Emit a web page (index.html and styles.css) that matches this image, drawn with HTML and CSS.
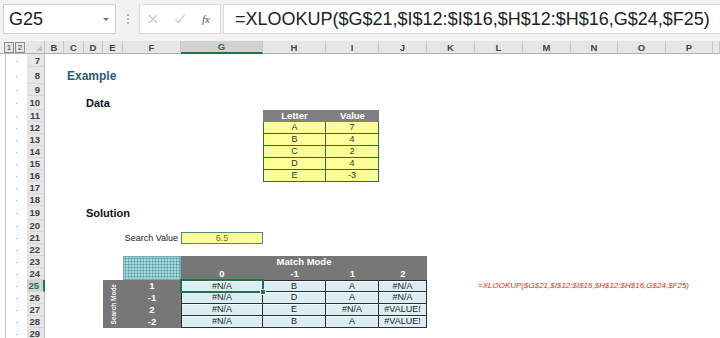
FILE: index.html
```html
<!DOCTYPE html>
<html lang="en">
<head>
    <meta charset="UTF-8">
    <title>XLOOKUP - Match Mode</title>
    <link rel="stylesheet" href="styles.css">
</head>
<body>
    <!-- FORMULA BAR -->
    <div class="formula-bar">
        <div class="name-box">
            <span>G25</span>
            <span class="caret"></span>
        </div>
        <div class="grip"></div>
        <div class="fx-box">
            <svg class="fx-icon" width="10" height="10" viewBox="0 0 10 10"><path d="M1 1L9 9M9 1L1 9" stroke="#c4c4c4" stroke-width="1.2" fill="none"/></svg>
            <svg class="fx-icon" width="10" height="10" viewBox="0 0 10 10"><path d="M0.5 5.5L3.5 8.5L9.5 1" stroke="#c4c4c4" stroke-width="1.2" fill="none"/></svg>
            <span class="fx-text">fx</span>
        </div>
        <div class="formula-input">=XLOOKUP($G$21,$I$12:$I$16,$H$12:$H$16,G$24,$F25)</div>
    </div>

    <!-- SHEET -->
    <div class="sheet">
        <!-- column headers -->
        <div class="outline-btns"><span>1</span><span>2</span></div>
        <div class="corner"><i></i></div>
        <div class="ch">B</div>
        <div class="ch">C</div>
        <div class="ch">D</div>
        <div class="ch">E</div>
        <div class="ch">F</div>
        <div class="ch active">G</div>
        <div class="ch">H</div>
        <div class="ch">I</div>
        <div class="ch">J</div>
        <div class="ch">K</div>
        <div class="ch">L</div>
        <div class="ch">M</div>
        <div class="ch">N</div>
        <div class="ch">O</div>
        <div class="ch">P</div>
        <div class="ch"></div>

        <!-- row headers -->
        <div class="rh"><span>7</span></div>
        <div class="rh"><span>8</span></div>
        <div class="rh"><span>9</span></div>
        <div class="rh"><span>10</span></div>
        <div class="rh"><span>11</span></div>
        <div class="rh"><span>12</span></div>
        <div class="rh"><span>13</span></div>
        <div class="rh"><span>14</span></div>
        <div class="rh"><span>15</span></div>
        <div class="rh"><span>16</span></div>
        <div class="rh"><span>17</span></div>
        <div class="rh"><span>18</span></div>
        <div class="rh"><span>19</span></div>
        <div class="rh"><span>20</span></div>
        <div class="rh"><span>21</span></div>
        <div class="rh"><span>22</span></div>
        <div class="rh"><span>23</span></div>
        <div class="rh"><span>24</span></div>
        <div class="rh on"><span>25</span></div>
        <div class="rh"><span>26</span></div>
        <div class="rh"><span>27</span></div>
        <div class="rh"><span>28</span></div>
        <div class="rh"><span>29</span></div>

        <!-- content -->
        <div class="title">Example</div>
        <div class="sub data-title">Data</div>

        <div class="letters">
            <div class="lh">Letter</div><div class="lh">Value</div>
            <div class="lc l">A</div><div class="lc">7</div>
            <div class="lc l">B</div><div class="lc">4</div>
            <div class="lc l">C</div><div class="lc">2</div>
            <div class="lc l">D</div><div class="lc">4</div>
            <div class="lc l">E</div><div class="lc">-3</div>
        </div>

        <div class="sub solution-title">Solution</div>
        <div class="search-label">Search Value</div>
        <div class="search-value">6.5</div>

        <div class="modes">
            <div class="mm-blank"></div>
            <div class="hatch"></div>
            <div class="mm-title">Match Mode</div>
            <div class="mm-col">0</div>
            <div class="mm-col">-1</div>
            <div class="mm-col">1</div>
            <div class="mm-col">2</div>
            <div class="sm-label"><span>Search Mode</span></div>

            <div class="sm-val">1</div>
            <div class="dc l t sel">#N/A</div><div class="dc t">B</div><div class="dc t">A</div><div class="dc t">#N/A</div>
            <div class="sm-val">-1</div>
            <div class="dc l">#N/A</div><div class="dc">D</div><div class="dc">A</div><div class="dc">#N/A</div>
            <div class="sm-val">2</div>
            <div class="dc l">#N/A</div><div class="dc">E</div><div class="dc">#N/A</div><div class="dc">#VALUE!</div>
            <div class="sm-val">-2</div>
            <div class="dc l">#N/A</div><div class="dc">B</div><div class="dc">A</div><div class="dc">#VALUE!</div>
        </div>

        <div class="formula-note">=XLOOKUP($G$21,$I$12:$I$16,$H$12:$H$16,G$24,$F25)</div>
    </div>
</body>
</html>
```

FILE: styles.css
```css
:root {
    --excel-green: #217346;
    --header-bg: #e6e6e6;
    --header-sel: #d2d2d2;
    --grey-block: #777777;
    --yellow: #ffff99;
    --teal-border: #2f6666;
}

body {
    margin: 0;
    width: 720px;
    height: 338px;
    overflow: hidden;
    font-family: 'Liberation Sans', Arial, sans-serif;
    background: #ffffff;
}

/* FORMULA BAR */
.formula-bar {
    height: 41px;
    box-sizing: border-box;
    padding: 4px 0 7px 3px;
    display: flex;
    align-items: stretch;
    background: #f2f2f2;
}

.name-box {
    width: 113px;
    box-sizing: border-box;
    background: #fff;
    border: 1px solid #d4d4d4;
    padding: 0 6px 0 5px;
    display: flex;
    align-items: center;
    justify-content: space-between;
    font-size: 18px;
    color: #222;
}

.caret {
    width: 0;
    height: 0;
    border-left: 3px solid transparent;
    border-right: 3px solid transparent;
    border-top: 3px solid #707070;
}

.grip {
    width: 0;
    margin: 10px 0 10px 11px;
    border-left: 2px dotted #b4b4b4;
}

.fx-box {
    width: 82px;
    margin-left: 10px;
    box-sizing: border-box;
    background: #fff;
    border: 1px solid #dcdcdc;
    padding-left: 8px;
    display: flex;
    align-items: center;
    gap: 17px;
}

.fx-text {
    font-family: 'Liberation Serif', serif;
    font-style: italic;
    font-size: 11px;
    color: #555;
    width: 10px;
}

.formula-input {
    flex: 1;
    margin-left: 2px;
    background: #fff;
    border: 1px solid #dcdcdc;
    border-right: none;
    padding-left: 11px;
    display: flex;
    align-items: center;
    font-size: 18px;
    color: #222;
    white-space: nowrap;
}

/* SHEET GRID */
.sheet {
    display: grid;
    grid-template-columns: 26px 19px 19px 20px 19px 20px 58px 82px 63px 53px 48px 48px 48px 48px 47px 48px 47px 7px;
    grid-template-rows: 13px 13px 17px 12px 14px repeat(8, 12px) 14px repeat(10, 12px);
    font-size: 9px;
    color: #222;
}

.outline-btns {
    grid-row: 1;
    background: #f0f0f0;
    border-bottom: 1px solid #b4b4b4;
    display: flex;
    align-items: flex-start;
    padding: 1px 0 0 4px;
    gap: 1px;
}

.outline-btns span {
    width: 8px;
    height: 9px;
    border: 1px solid #8c8c8c;
    background: #e4e4e4;
    font-size: 8px;
    line-height: 9px;
    text-align: center;
    color: #444;
}

.corner {
    grid-row: 1;
    background: var(--header-bg);
    border-right: 1px solid #c4c4c4;
    border-bottom: 1px solid #a9b3be;
    display: flex;
    justify-content: flex-end;
    align-items: flex-end;
    padding: 0 2px 2px 0;
}

.corner i {
    width: 0;
    height: 0;
    border-left: 6px solid transparent;
    border-bottom: 6px solid #c0c0c0;
}

.ch {
    grid-row: 1;
    background: var(--header-bg);
    border-right: 1px solid #c8c8c8;
    border-bottom: 1px solid #a9b3be;
    display: flex;
    align-items: center;
    justify-content: center;
    font-size: 9.5px;
    font-weight: bold;
    color: #444;
}

.ch.active {
    background: var(--header-sel);
    color: var(--excel-green);
    border-bottom: 2px solid var(--excel-green);
}

.rh {
    grid-column: 1 / 3;
    display: flex;
}

.rh::before {
    content: "·";
    width: 21px;
    margin-left: 5px;
    border-left: 1px solid #c3c3c3;
    display: flex;
    align-items: center;
    justify-content: center;
    font-size: 9px;
    color: #888;
}

.rh span {
    flex: 1;
    background: var(--header-bg);
    border-right: 1px solid #b9b9b9;
    border-bottom: 1px solid #d6d6d6;
    padding-right: 4px;
    display: flex;
    align-items: center;
    justify-content: flex-end;
    font-size: 9.5px;
    font-weight: bold;
    color: #444;
}

.rh.on span {
    background: var(--header-sel);
    color: var(--excel-green);
    border-right: 2px solid var(--excel-green);
}

/* CONTENT */
.title {
    grid-row: 3;
    grid-column: 4 / 9;
    align-self: center;
    padding-left: 3px;
    font-size: 12px;
    font-weight: bold;
    color: #1f6277;
}

.sub {
    grid-column: 5 / 9;
    align-self: center;
    padding-left: 2px;
    font-size: 11px;
    font-weight: bold;
    color: #111;
}

.data-title { grid-row: 5; }
.solution-title { grid-row: 14; }

.letters {
    grid-row: 6 / 12;
    grid-column: 9 / 11;
    display: grid;
    grid-template-columns: 63px 53px;
    grid-auto-rows: 12px;
    text-align: center;
    color: #333;
}

.lh {
    background: #7f7f7f;
    color: #fff;
    font-weight: bold;
    font-size: 9.5px;
    line-height: 12px;
}

.lc {
    background: var(--yellow);
    border-right: 1px solid var(--teal-border);
    border-bottom: 1px solid var(--teal-border);
    line-height: 11px;
}

.lc.l { border-left: 1px solid var(--teal-border); }

.search-label {
    grid-row: 16;
    grid-column: 7;
    text-align: right;
    padding-right: 3px;
    line-height: 12px;
}

.search-value {
    grid-row: 16;
    grid-column: 8;
    background: var(--yellow);
    border: 1px solid #4e8585;
    text-align: center;
    line-height: 10px;
    color: #6a780f;
}

/* MATCH MODE TABLE */
.modes {
    grid-row: 18 / 24;
    grid-column: 6 / 12;
    display: grid;
    grid-template-columns: 20px 58px 82px 63px 53px 48px;
    grid-template-rows: repeat(6, 12px);
    text-align: center;
}

.mm-blank { grid-column: 1; grid-row: 1 / 3; }

.hatch {
    grid-column: 2;
    grid-row: 1 / 3;
    background-color: #a9d7dc;
    background-image: radial-gradient(circle, #4b98a0 0.8px, transparent 1.2px);
    background-size: 3px 3px;
    border: 1px solid #6fb0b6;
}

.mm-title {
    grid-column: 3 / 7;
    grid-row: 1;
    background: var(--grey-block);
}

.mm-title, .mm-col, .sm-val {
    color: #fff;
    font-weight: bold;
    font-size: 9.5px;
    line-height: 12px;
}

.mm-col {
    grid-row: 2;
    background: var(--grey-block);
}

.sm-label {
    grid-column: 1;
    grid-row: 3 / 7;
    background: var(--grey-block);
    display: flex;
    align-items: center;
    justify-content: center;
}

.sm-label span {
    writing-mode: vertical-rl;
    transform: rotate(180deg);
    font-size: 6.5px;
    font-weight: bold;
    color: #f2f2f2;
}

.sm-val { background: var(--grey-block); }

.dc {
    background: #daeef3;
    border-right: 1px solid #2e2e2e;
    border-bottom: 1px solid #2e2e2e;
    box-shadow: inset 0 1px 0 #f3fafc;
    line-height: 11px;
    color: #1e1e1e;
}

.dc.l { border-left: 1px solid #2e2e2e; }
.dc.t { border-top: 1px solid #2e2e2e; line-height: 10px; }

.dc.sel {
    position: relative;
    outline: 2px solid var(--excel-green);
    outline-offset: -1px;
    z-index: 1;
}

.dc.sel::after {
    content: "";
    position: absolute;
    right: -4px;
    bottom: -4px;
    width: 4px;
    height: 4px;
    background: var(--excel-green);
    border: 1px solid #fff;
}

.formula-note {
    grid-row: 20;
    grid-column: 13 / 19;
    padding-left: 3px;
    white-space: nowrap;
    font-size: 8px;
    font-style: italic;
    line-height: 12px;
    color: #f02424;
}
```
